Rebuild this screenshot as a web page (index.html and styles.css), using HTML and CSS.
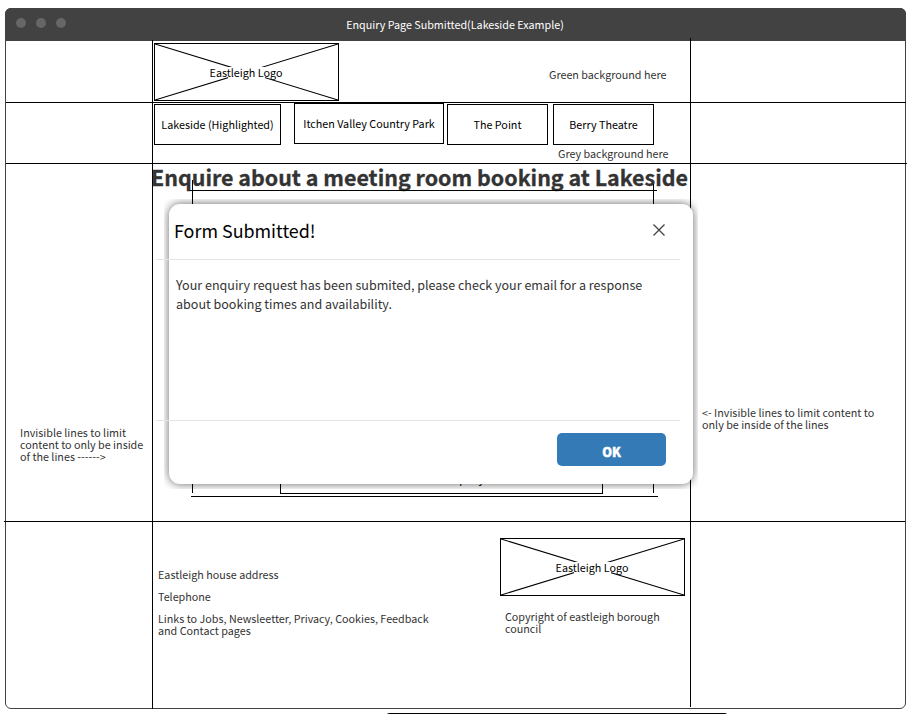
FILE: index.html
```html
<!DOCTYPE html>
<html lang="en">
<head>
<meta charset="utf-8">
<title>Enquiry Page Submitted(Lakeside Example)</title>
<link rel="stylesheet" href="styles.css">
</head>
<body>
<main class="window">
  <header class="titlebar">
    <div class="dots"><i class="dot"></i><i class="dot"></i><i class="dot"></i></div>
    <div class="title">Enquiry Page Submitted(Lakeside Example)</div>
  </header>

  <section class="row brand-row">
    <div class="content brand">
      <div class="logo">
        <svg class="cross" viewBox="0 0 183 56"><path d="M0 0 183 56M0 56 183 0"/></svg>
        <span class="logo-text">Eastleigh Logo</span>
      </div>
      <p class="note green-note">Green background here</p>
    </div>
  </section>

  <section class="row nav-row">
    <div class="content">
      <nav class="nav">
        <a class="tab lakeside">Lakeside (Highlighted)</a>
        <a class="tab itchen">Itchen Valley Country Park</a>
        <a class="tab point">The Point</a>
        <a class="tab">Berry Theatre</a>
      </nav>
      <p class="note grey-note">Grey background here</p>
    </div>
  </section>

  <section class="row main-row">
    <p class="note left-note">Invisible lines to limit<br>content to only be inside<br>of the lines ------&gt;</p>
    <div class="content">
      <h1 class="heading">Enquire about a meeting room booking at Lakeside</h1>
    </div>
    <p class="note right-note">&lt;- Invisible lines to limit content to<br>only be inside of the lines</p>
  </section>

  <footer class="row footer-row">
    <div class="content footer">
      <div class="links">
        <p class="note">Eastleigh house address</p>
        <p class="note">Telephone</p>
        <p class="note">Links to Jobs, Newsleetter, Privacy, Cookies, Feedback<br>and Contact pages</p>
      </div>
      <div class="legal">
        <div class="logo">
          <svg class="cross" viewBox="0 0 183 56"><path d="M0 0 183 56M0 56 183 0"/></svg>
          <span class="logo-text">Eastleigh Logo</span>
        </div>
        <p class="note copyright">Copyright of eastleigh borough<br>council</p>
      </div>
    </div>
  </footer>
</main>

<i class="guide guide-left"></i>
<i class="guide guide-right"></i>
<i class="guide form-top"></i>
<i class="guide form-left"></i>
<i class="guide form-right"></i>
<i class="guide form-bottom"></i>
<div class="company">Company</div>

<div class="dialog-layer">
  <section class="dialog">
    <header class="dialog-head">
      <h2 class="dialog-title">Form Submitted!</h2>
      <svg class="close" viewBox="0 0 14 14"><path d="M1.5 1.5 12.5 12.5M12.5 1.5 1.5 12.5"/></svg>
    </header>
    <p class="dialog-body">Your enquiry request has been submited, please check your email for a response<br>about booking times and availability.</p>
    <div class="dialog-foot"><button class="ok">OK</button></div>
  </section>
</div>
<i class="divider divider-top"></i>
<i class="divider divider-bottom"></i>
<i class="next-frame"></i>
</body>
</html>
```

FILE: styles.css
```css
* { box-sizing: border-box; }
body {
  position: relative;
  margin: 0;
  width: 919px;
  height: 714px;
  padding: 8px 0 0 5px;
  overflow: hidden;
  background: #fff;
  color: #333;
  font: 10.75px/12px "Noto Sans CJK SC", "Open Sans", sans-serif;
  white-space: nowrap;
}
p, h1, h2 { margin: 0; }

.window { width: 901px; height: 701px; border: 1px solid #424242; border-radius: 6px; background: #fff; }
.titlebar {
  display: grid;
  grid-template-columns: 80px 1fr 80px;
  align-items: center;
  height: 33px;
  margin: -1px -1px 0;
  border-radius: 6px 6px 0 0;
  background: #424242;
  color: #fff;
}
.dots { display: flex; gap: 10px; padding: 0 0 3px 11.3px; }
.dot { width: 10px; height: 10px; border-radius: 50%; background: #666; }
.title { text-align: center; padding: 1px 1px 0 0; }

.row { display: grid; grid-template-columns: 146px 538px 1fr; border-bottom: 1px solid #000; }
.content { grid-column: 2; }
.brand-row { height: 62px; margin-right: -1px; }
.nav-row { height: 61px; margin-right: -2px; }
.main-row { height: 358px; margin-left: -2px; padding-left: 2px; }
.footer-row { border: 0; }

.brand { display: flex; align-items: flex-start; padding: 2px 0 0 2px; }
.green-note { margin: 26px 0 0 210px; }
.logo {
  display: grid;
  place-items: center;
  width: 185px;
  height: 58px;
  border: 1px solid #000;
  color: #000;
}
.cross { grid-area: 1 / 1; width: 183px; height: 56px; stroke: #000; stroke-width: 1.1; fill: none; }
.logo-text { grid-area: 1 / 1; z-index: 1; height: 12px; padding-right: 1px; margin-top: 1px; background: linear-gradient(#fff, #fff) center / 37px 12px no-repeat; }

.nav { display: flex; align-items: flex-start; padding: 1px 0 0 2px; }
.tab {
  display: grid;
  place-items: center;
  width: 101px;
  height: 41px;
  border: 1px solid #000;
  color: #000;
}
.lakeside { width: 127px; margin-right: 13px; }
.itchen { width: 150px; margin: -1px 3px 0 0; }
.point { margin-right: 5px; }
.grey-note { margin: 3px 0 0 406px; }

.heading { margin: 0 0 0 -1px; font-size: 21.45px; line-height: 26px; font-weight: 700; -webkit-text-stroke: .3px #333; }
.left-note { margin: 263px 0 0 14px; }
.right-note { margin: 243px 0 0 12px; }

.footer { display: flex; justify-content: space-between; padding: 16px 5px 0 6px; }
.links { display: grid; gap: 10px; padding-top: 31px; align-content: start; }
.copyright { margin: 15px 0 0 5px; }

.guide { position: absolute; background: #000; }
.guide-left { left: 152px; top: 40px; width: 1px; height: 669px; }
.guide-right { left: 690px; top: 38px; width: 1px; height: 669px; }
.form-top { left: 190px; top: 190px; width: 467px; height: 1px; }
.form-left { left: 192px; top: 180px; width: 1px; height: 313px; }
.form-right { left: 653px; top: 184px; width: 1px; height: 309px; }
.form-bottom { left: 191px; top: 496px; width: 467px; height: 1px; }
.company {
  position: absolute;
  left: 280px;
  top: 470px;
  width: 323px;
  height: 24px;
  padding: 2px 0 0 155px;
  border: 1px solid #000;
  color: #000;
}

.dialog-layer { position: absolute; left: 164px; top: 199px; width: 534px; height: 290px; padding: 5px; overflow: hidden; }
.dialog {
  display: flex;
  flex-direction: column;
  height: 280px;
  border-radius: 11px;
  background: #fff;
  box-shadow: 0 0 10px rgba(0, 0, 0, .6);
}
.dialog-head { display: flex; justify-content: space-between; align-items: center; height: 55px; padding: 0 27px 0 5px; }
.dialog-title { margin-top: -3px; color: #000; font-size: 17.9px; line-height: 24px; font-weight: 400; }
.close { width: 14px; height: 14px; margin-top: -3px; stroke: #444; stroke-width: 1.3; fill: none; }
.dialog-body { flex: 1; padding: 16px 0 0 7px; font-size: 12.54px; line-height: 19px; }
.dialog-foot { display: flex; justify-content: flex-end; padding: 0 27px 18px 0; }
.ok {
  width: 109px;
  height: 33px;
  padding: 4px 0 0;
  border: 0;
  border-radius: 5px;
  background: #337ab7;
  color: #fff;
  font: 900 12.54px/18px "Noto Sans CJK SC", "Open Sans", sans-serif;
  -webkit-text-stroke: .4px #fff;
}
.divider { position: absolute; left: 156px; width: 524px; height: 1px; background: #e5e5e5; }
.divider-top { top: 259px; }
.divider-bottom { top: 420px; }
.next-frame { position: absolute; left: 384px; top: 713px; width: 346px; height: 12px; border-radius: 6px; background: #000; }
```
